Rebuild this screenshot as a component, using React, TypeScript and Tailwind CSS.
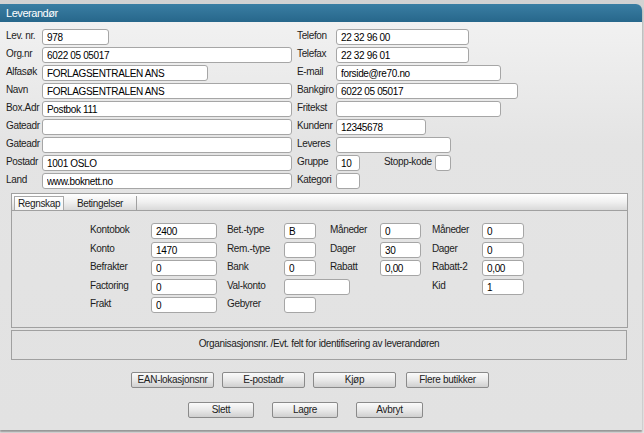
import React from 'react';

const FONT = "font-['Liberation_Sans',Arial,sans-serif]";

function Field({ value = '', className = '' }: { value?: string; className?: string }) {
  return (
    <input
      readOnly
      value={value}
      className={`h-[16px] shrink-0 rounded-[3px] border border-[#a6a6a6] bg-white px-[4px] pt-[1px] text-[10px] leading-[12px] tracking-[-0.35px] text-black outline-none ${FONT} ${className}`}
    />
  );
}

function Btn({ label, className = '' }: { label: string; className?: string }) {
  return (
    <button
      className={`h-[16px] rounded-[2px] border border-[#8a8a8a] bg-gradient-to-b from-[#fafafa] via-[#e9e9e9] to-[#d0d0d0] text-[10px] leading-[12px] tracking-[-0.3px] text-[#222] ${className}`}
    >
      {label}
    </button>
  );
}

const leftRows: [string, string, string][] = [
  ['Lev. nr.', '978', 'w-[67px]'],
  ['Org.nr', '6022 05 05017', 'w-[250px]'],
  ['Alfasøk', 'FORLAGSENTRALEN ANS', 'w-[166px]'],
  ['Navn', 'FORLAGSENTRALEN ANS', 'w-[250px]'],
  ['Box.Adr', 'Postbok 111', 'w-[250px]'],
  ['Gateadr', '', 'w-[250px]'],
  ['Gateadr', '', 'w-[250px]'],
  ['Postadr', '1001 OSLO', 'w-[250px]'],
  ['Land', 'www.boknett.no', 'w-[250px]'],
];

const rightRows: [string, string, string][] = [
  ['Telefon', '22 32 96 00', 'w-[133px]'],
  ['Telefax', '22 32 96 01', 'w-[133px]'],
  ['E-mail', 'forside@re70.no', 'w-[165px]'],
  ['Bankgiro', '6022 05 05017', 'w-[182px]'],
  ['Fritekst', '', 'w-[165px]'],
  ['Kundenr', '12345678', 'w-[90px]'],
  ['Leveres', '', 'w-[115px]'],
  ['Gruppe', '10', 'w-[24px]'],
  ['Kategori', '', 'w-[24px]'],
];

// tab content: [label, value, inputWidth] per column group, null = empty cell
type Cell = [string, string, string] | null;
const tabRows: Cell[][] = [
  [['Kontobok', '2400', 'w-[66px]'], ['Bet.-type', 'B', 'w-[32px]'], ['Måneder', '0', 'w-[41px]'], ['Måneder', '0', 'w-[42px]']],
  [['Konto', '1470', 'w-[66px]'], ['Rem.-type', '', 'w-[32px]'], ['Dager', '30', 'w-[41px]'], ['Dager', '0', 'w-[42px]']],
  [['Befrakter', '0', 'w-[66px]'], ['Bank', '0', 'w-[32px]'], ['Rabatt', '0,00', 'w-[41px]'], ['Rabatt-2', '0,00', 'w-[42px]']],
  [['Factoring', '0', 'w-[66px]'], ['Val-konto', '', 'w-[66px]'], null, ['Kid', '1', 'w-[42px]']],
  [['Frakt', '0', 'w-[66px]'], ['Gebyrer', '', 'w-[32px]'], null, null],
];

const labelCls = 'text-[10px] leading-[13px] tracking-[-0.35px] text-[#1c1c1c]';

export default function App() {
  return (
    <div className={`h-[433px] w-[644px] overflow-hidden bg-gradient-to-b from-[#d2d2d2] to-[#e4e4e4] pt-[4px] ${FONT}`}>
      <div className="flex h-[426px] w-[642px] flex-col overflow-hidden rounded-tr-[6px] bg-[#e2e2e2] shadow-[0_2px_2px_rgba(0,0,0,0.35)]">
        {/* title bar */}
        <div className="flex h-[18px] items-center bg-gradient-to-b from-[#3a7ea3] to-[#27678b] pl-[6px]">
          <span className="text-[11px] leading-[13px] tracking-[-0.45px] text-white">Leverandør</span>
        </div>

        <div className="flex-1 bg-gradient-to-b from-[#f1f1f1] via-[#e4e4e4] via-30% to-[#e2e2e2] text-[10px] leading-[13px]">
          {/* upper fields */}
          <div className="flex pt-[7px]">
            <div className="flex w-[297px] flex-col gap-[2px] pl-[6px]">
              {leftRows.map(([l, v, w], i) => (
                <div key={i} className="flex items-start">
                  <span className={`w-[36px] shrink-0 ${labelCls}`}>{l}</span>
                  <Field value={v} className={w} />
                </div>
              ))}
            </div>
            <div className="flex flex-col gap-[2px]">
              {rightRows.map(([l, v, w], i) => (
                <div key={i} className="flex items-start">
                  <span className={`w-[39px] shrink-0 ${labelCls}`}>{l}</span>
                  <Field value={v} className={w} />
                  {l === 'Gruppe' && (
                    <>
                      <span className={`ml-[24px] w-[51px] shrink-0 ${labelCls}`}>Stopp-kode</span>
                      <Field className="w-[16px]" />
                    </>
                  )}
                </div>
              ))}
            </div>
          </div>

          {/* tab panel */}
          <div className="ml-[11px] mt-[4px] w-[617px] border border-[#a0a0a0]">
            <div className="flex h-[17px] items-end border-b border-[#a0a0a0] bg-gradient-to-b from-[#ffffff] via-[#f0f0f0] to-[#d9d9d9]">
              <div className="ml-[2px] flex h-[14px] w-[50px] items-center justify-center border border-b-0 border-[#a8a8a8] bg-gradient-to-b from-[#ffffff] to-[#f3f3f3]">
                <span className={labelCls}>Regnskap</span>
              </div>
              <div className="flex h-[14px] w-[73px] items-center justify-center border-r border-[#a0a0a0]">
                <span className={labelCls}>Betingelser</span>
              </div>
            </div>
            <div className="h-[116px] pl-[78px] pt-[12px]">
              <div className="grid grid-cols-[61px_76px_57px_46px_50px_52px_50px_42px] gap-y-[2.5px]">
                {tabRows.map((row, r) =>
                  row.map((cell, c) =>
                    cell ? (
                      <React.Fragment key={`${r}-${c}`}>
                        <span className={labelCls}>{cell[0]}</span>
                        <Field value={cell[1]} className={cell[2]} />
                      </React.Fragment>
                    ) : (
                      <React.Fragment key={`${r}-${c}`}>
                        <span />
                        <span className="h-[16px]" />
                      </React.Fragment>
                    )
                  )
                )}
              </div>
            </div>
          </div>

          <div className="ml-[11px] mt-[2px] h-[30px] w-[616px] border border-[#a0a0a0] pt-[6px] text-center">
            <span className={labelCls}>Organisasjonsnr. /Evt. felt for identifisering av leverandøren</span>
          </div>

          {/* buttons */}
          <div className="mt-[12px] flex gap-[8px] pl-[131px]">
            <Btn label="EAN-lokasjonsnr" className="w-[83px]" />
            <Btn label="E-postadr" className="w-[83px]" />
            <Btn label="Kjøp" className="w-[83px]" />
            <Btn label="Flere butikker" className="ml-[2px] w-[83px]" />
          </div>
          <div className="mt-[14px] flex gap-[18px] pl-[188px]">
            <Btn label="Slett" className="w-[66px]" />
            <Btn label="Lagre" className="w-[66px]" />
            <Btn label="Avbryt" className="w-[67px]" />
          </div>
        </div>
      </div>
    </div>
  );
}
